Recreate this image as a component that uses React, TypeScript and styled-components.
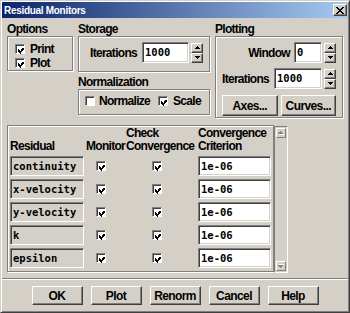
import React from "react";
import styled, { createGlobalStyle } from "styled-components";

const SANS = `"Liberation Sans", Arial, Helvetica, sans-serif`;
const MONO = `"DejaVu Sans Mono", "Liberation Mono", monospace`;

const GlobalStyle = createGlobalStyle`
  html, body { margin: 0; padding: 0; background: #d4d0c8; }
  body { font-family: ${SANS}; }
  *, *::before, *::after { box-sizing: border-box; }
`;

const Window = styled.div`
  width: 350px;
  height: 313px;
  background: #d4d0c8;
  border: 1px solid;
  border-color: #d4d0c8 #404040 #404040 #d4d0c8;
  box-shadow: inset 1px 1px #ffffff, inset -1px -1px #808080;
  padding: 1px;
  display: flex;
  flex-direction: column;
`;

const TitleBar = styled.div`
  height: 16px;
  display: flex;
  align-items: center;
  padding: 0 1px 0 2px;
  background: linear-gradient(to right, #0a246a, #a6caf0);
`;

const TitleText = styled.span`
  flex: 1;
  color: #ffffff;
  font: bold 10px ${SANS};
  letter-spacing: -0.3px;
  white-space: nowrap;
`;

const CloseButton = styled.div`
  width: 14px;
  height: 12px;
  display: flex;
  align-items: center;
  justify-content: center;
  background: #d4d0c8;
  border: 1px solid;
  border-color: #ffffff #404040 #404040 #ffffff;
  box-shadow: inset -1px -1px #808080;
`;

const Body = styled.div`
  padding: 5px 5px 0 5px;
  display: flex;
  flex-direction: column;
`;

const TopRow = styled.div`
  display: flex;
  gap: 5px;
  align-items: flex-start;
`;

const Column = styled.div`
  display: flex;
  flex-direction: column;
`;

const GroupLabel = styled.div<{ $gapTop?: number }>`
  height: 13px;
  margin-top: ${(p) => p.$gapTop ?? 0}px;
  font: bold 12px ${SANS};
  line-height: 13px;
  letter-spacing: -0.7px;
  color: #000;
  white-space: nowrap;
`;

const Frame = styled.div<{ $w: number; $h: number }>`
  width: ${(p) => p.$w}px;
  height: ${(p) => p.$h}px;
  border: 1px solid #808080;
  box-shadow: inset 1px 1px #ffffff, 1px 1px #ffffff;
`;

const OptionsFrame = styled(Frame)`
  padding: 5px 0 0 7px;
  display: flex;
  flex-direction: column;
`;

const StorageFrame = styled(Frame)`
  padding: 5px 0 0 11px;
  display: flex;
  align-items: flex-start;
`;

const NormFrame = styled(Frame)`
  padding: 4px 0 0 6px;
  display: flex;
  gap: 8px;
`;

const PlotFrame = styled(Frame)`
  padding: 5px 6px 0 6px;
  display: flex;
  flex-direction: column;
  gap: 5px;
`;

const CheckItem = styled.label<{ $gap?: number }>`
  height: 14px;
  display: flex;
  align-items: center;
  gap: ${(p) => p.$gap ?? 4}px;
`;

const Text = styled.span`
  font: bold 12px ${SANS};
  letter-spacing: -0.7px;
  color: #000;
  white-space: nowrap;
`;

const CheckBox = styled.span`
  width: 10px;
  height: 10px;
  flex: none;
  display: flex;
  padding: 2px 0 0 2px;
  background: #ffffff;
  border: 1px solid;
  border-color: #808080 #ffffff #ffffff #808080;
  box-shadow: inset 1px 1px #404040;
`;

const FieldRow = styled.div<{ $justify?: string; $gap?: number }>`
  height: 21px;
  display: flex;
  align-items: center;
  justify-content: ${(p) => p.$justify ?? "flex-start"};
  gap: ${(p) => p.$gap ?? 5}px;
`;

const Field = styled.div<{ $w: number; $h?: number; $bg?: string }>`
  width: ${(p) => p.$w}px;
  height: ${(p) => p.$h ?? 21}px;
  flex: none;
  border: 1px solid;
  border-color: #808080 #ffffff #ffffff #808080;
  box-shadow: inset 1px 1px #404040, inset -1px -1px #d4d0c8;
  background: ${(p) => p.$bg ?? "#ffffff"};
  font: bold 10.5px ${MONO};
  line-height: ${(p) => (p.$h ?? 21) - 2}px;
  padding-left: 2px;
  color: #000;
  white-space: nowrap;
  overflow: hidden;
`;

const SpinGroup = styled.div`
  display: flex;
  align-items: center;
  gap: 2px;
`;

const Spinner = styled.div`
  width: 12px;
  height: 20px;
  display: flex;
  flex-direction: column;
`;

const SpinBtn = styled.div`
  height: 10px;
  display: flex;
  align-items: center;
  justify-content: center;
  background: #d4d0c8;
  border: 1px solid;
  border-color: #ffffff #404040 #404040 #ffffff;
  box-shadow: inset -1px -1px #808080;
`;

const ButtonRow = styled.div`
  display: flex;
  gap: 3px;
  margin-top: 1px;
`;

const Button = styled.div<{ $w?: number; $h?: number }>`
  ${(p) => (p.$w ? `width: ${p.$w}px;` : "flex: 1;")}
  height: ${(p) => p.$h ?? 21}px;
  display: flex;
  align-items: center;
  justify-content: center;
  background: #d4d0c8;
  border: 1px solid;
  border-color: #ffffff #404040 #404040 #ffffff;
  box-shadow: inset -1px -1px #808080;
  font: bold 12px ${SANS};
  letter-spacing: -0.6px;
  color: #000;
  white-space: nowrap;
`;

const TableBlock = styled.div`
  margin-top: 7px;
  height: 148px;
  display: flex;
  align-items: flex-start;
`;

const TableFrame = styled(Frame)`
  padding: 1px 0 0 2px;
  display: grid;
  grid-template-columns: 76px 40px 72px 73px;
  grid-template-rows: 26px repeat(5, 20px);
  row-gap: 3px;
  align-content: start;
`;

const HeaderCell = styled.div`
  display: flex;
  flex-direction: column;
  justify-content: flex-end;
  font: bold 12px ${SANS};
  line-height: 13px;
  letter-spacing: -0.7px;
  color: #000;
  white-space: nowrap;
`;

const CheckCell = styled.div<{ $indent: number }>`
  display: flex;
  align-items: center;
  padding-left: ${(p) => p.$indent}px;
`;

const ScrollBar = styled.div`
  width: 14px;
  height: 147px;
  margin-top: 1px;
  padding: 1px;
  display: flex;
  flex-direction: column;
  justify-content: space-between;
  border: 1px solid;
  border-color: #808080 #ffffff #ffffff #808080;
  background: #d4d0c8;
`;

const ScrollArrow = styled.div`
  width: 10px;
  height: 10px;
  display: flex;
  align-items: center;
  justify-content: center;
  background: #d4d0c8;
  border: 1px solid;
  border-color: #ffffff #808080 #808080 #ffffff;
`;

const Separator = styled.div`
  margin-top: 5px;
  height: 2px;
  border-top: 1px solid #808080;
  border-bottom: 1px solid #ffffff;
`;

const ButtonBar = styled.div`
  margin-top: 6px;
  display: flex;
  justify-content: center;
  gap: 8px;
`;

const CheckMark = () => (
  <svg width="7" height="7" viewBox="0 0 7 7" shapeRendering="crispEdges">
    <path
      d="M6 0h1v1H6zM5 1h2v1H5zM0 2h1v1H0zM4 2h3v1H4zM0 3h2v1H0zM3 3h3v1H3zM0 4h5v1H0zM1 5h3v1H1zM2 6h1v1H2z"
      fill="#000"
    />
  </svg>
);

const Check = ({ checked }: { checked: boolean }) => (
  <CheckBox>{checked && <CheckMark />}</CheckBox>
);

const ArrowUp = ({ color = "#000" }: { color?: string }) => (
  <svg width="5" height="3" viewBox="0 0 5 3" shapeRendering="crispEdges">
    <path d="M2 0h1v1h1v1h1v1H0V2h1V1h1z" fill={color} />
  </svg>
);

const ArrowDown = ({ color = "#000" }: { color?: string }) => (
  <svg width="5" height="3" viewBox="0 0 5 3" shapeRendering="crispEdges">
    <path d="M0 0h5v1H4v1H3v1H2V2H1V1H0z" fill={color} />
  </svg>
);

const GrayArrow = ({ down }: { down?: boolean }) => (
  <svg width="6" height="4" viewBox="0 0 6 4" shapeRendering="crispEdges">
    <g transform={down ? "translate(0,4) scale(1,-1)" : undefined}>
      <path d="M3 1h1v1h1v1h1v1H1V3h1V2h1z" fill="#ffffff" />
      <path d="M2 0h1v1h1v1h1v1H0V2h1V1h1z" fill="#808080" />
    </g>
  </svg>
);

const CloseGlyph = () => (
  <svg width="8" height="7" viewBox="0 0 8 7" shapeRendering="crispEdges">
    <path
      d="M0 0h2v1H0zM6 0h2v1H6zM1 1h2v1H1zM5 1h2v1H5zM2 2h4v1H2zM3 3h2v1H3zM2 4h4v1H2zM1 5h2v1H1zM5 5h2v1H5zM0 6h2v1H0zM6 6h2v1H6z"
      fill="#000"
    />
  </svg>
);

const SpinField = ({ value, width }: { value: string; width: number }) => (
  <SpinGroup>
    <Field $w={width}>{value}</Field>
    <Spinner>
      <SpinBtn>
        <ArrowUp />
      </SpinBtn>
      <SpinBtn>
        <ArrowDown />
      </SpinBtn>
    </Spinner>
  </SpinGroup>
);

const residuals = ["continuity", "x-velocity", "y-velocity", "k", "epsilon"];

export default function App() {
  return (
    <>
      <GlobalStyle />
      <Window>
        <TitleBar>
          <TitleText>Residual Monitors</TitleText>
          <CloseButton>
            <CloseGlyph />
          </CloseButton>
        </TitleBar>
        <Body>
          <TopRow>
            <Column>
              <GroupLabel>Options</GroupLabel>
              <OptionsFrame $w={66} $h={35}>
                <CheckItem $gap={5}>
                  <Check checked />
                  <Text>Print</Text>
                </CheckItem>
                <CheckItem $gap={5}>
                  <Check checked />
                  <Text>Plot</Text>
                </CheckItem>
              </OptionsFrame>
            </Column>
            <Column>
              <GroupLabel>Storage</GroupLabel>
              <StorageFrame $w={132} $h={36}>
                <FieldRow>
                  <Text>Iterations</Text>
                  <SpinField value="1000" width={47} />
                </FieldRow>
              </StorageFrame>
              <GroupLabel $gapTop={4}>Normalization</GroupLabel>
              <NormFrame $w={132} $h={26}>
                <CheckItem>
                  <Check checked={false} />
                  <Text>Normalize</Text>
                </CheckItem>
                <CheckItem $gap={5}>
                  <Check checked />
                  <Text>Scale</Text>
                </CheckItem>
              </NormFrame>
            </Column>
            <Column>
              <GroupLabel>Plotting</GroupLabel>
              <PlotFrame $w={128} $h={82}>
                <FieldRow $justify="flex-end" $gap={4}>
                  <Text>Window</Text>
                  <SpinField value="0" width={28} />
                </FieldRow>
                <FieldRow $justify="space-between">
                  <Text>Iterations</Text>
                  <SpinField value="1000" width={48} />
                </FieldRow>
                <ButtonRow>
                  <Button>Axes...</Button>
                  <Button>Curves...</Button>
                </ButtonRow>
              </PlotFrame>
            </Column>
          </TopRow>
          <TableBlock>
            <TableFrame $w={267} $h={147}>
              <HeaderCell>
                <span>Residual</span>
              </HeaderCell>
              <HeaderCell>
                <span>Monitor</span>
              </HeaderCell>
              <HeaderCell>
                <span>Check</span>
                <span>Convergence</span>
              </HeaderCell>
              <HeaderCell>
                <span>Convergence</span>
                <span>Criterion</span>
              </HeaderCell>
              {residuals.map((r) => (
                <React.Fragment key={r}>
                  <Field $w={74} $h={20} $bg="#d4d0c8">
                    {r}
                  </Field>
                  <CheckCell $indent={10}>
                    <Check checked />
                  </CheckCell>
                  <CheckCell $indent={26}>
                    <Check checked />
                  </CheckCell>
                  <Field $w={73} $h={20}>
                    1e-06
                  </Field>
                </React.Fragment>
              ))}
            </TableFrame>
            <ScrollBar>
              <ScrollArrow>
                <GrayArrow />
              </ScrollArrow>
              <ScrollArrow>
                <GrayArrow down />
              </ScrollArrow>
            </ScrollBar>
          </TableBlock>
        </Body>
        <Separator />
        <ButtonBar>
          <Button $w={51} $h={19}>OK</Button>
          <Button $w={51} $h={19}>Plot</Button>
          <Button $w={51} $h={19}>Renorm</Button>
          <Button $w={51} $h={19}>Cancel</Button>
          <Button $w={51} $h={19}>Help</Button>
        </ButtonBar>
      </Window>
    </>
  );
}
